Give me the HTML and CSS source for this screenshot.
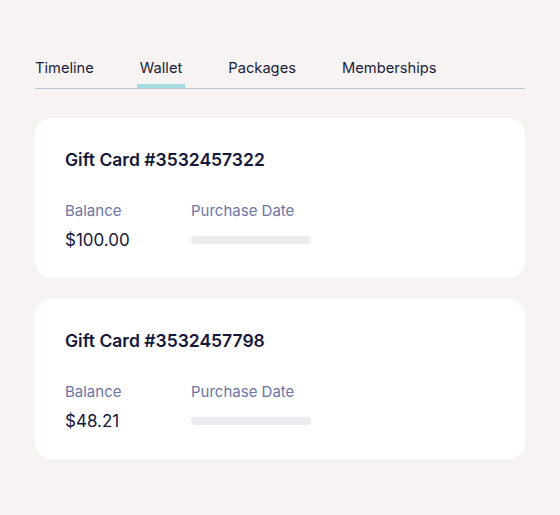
FILE: index.html
```html
<!DOCTYPE html>
<html lang="en">
<head>
    <meta charset="UTF-8">
    <meta name="viewport" content="width=device-width, initial-scale=1.0">
    <title>Wallet</title>
    <link rel="stylesheet" href="styles.css">
</head>
<body>
    <div class="page">
        <nav class="tabs">
            <a class="tab">Timeline</a>
            <a class="tab active">Wallet</a>
            <a class="tab">Packages</a>
            <a class="tab">Memberships</a>
        </nav>

        <div class="cards">
            <div class="card">
                <h2 class="card-title">Gift Card #3532457322</h2>
                <div class="card-fields">
                    <div class="field field-balance">
                        <span class="field-label">Balance</span>
                        <span class="field-value">$100.00</span>
                    </div>
                    <div class="field">
                        <span class="field-label">Purchase Date</span>
                        <span class="placeholder"></span>
                    </div>
                </div>
            </div>

            <div class="card">
                <h2 class="card-title">Gift Card #3532457798</h2>
                <div class="card-fields">
                    <div class="field field-balance">
                        <span class="field-label">Balance</span>
                        <span class="field-value">$48.21</span>
                    </div>
                    <div class="field">
                        <span class="field-label">Purchase Date</span>
                        <span class="placeholder"></span>
                    </div>
                </div>
            </div>
        </div>
    </div>
</body>
</html>
```

FILE: styles.css
```css
body {
    margin: 0;
    background: #f6f3f2;
    font-family: 'Inter', 'Noto Sans', sans-serif;
    color: #1b1c3d;
}

.page {
    padding: 58px 35px 40px;
}

.tabs {
    display: flex;
    gap: 46px;
    border-bottom: 1px solid #bcc0da;
}

.tab {
    position: relative;
    font-size: 14.7px;
    line-height: 20px;
    padding-bottom: 10px;
    color: #1b1c3d;
}

.tab.active::after {
    content: "";
    position: absolute;
    left: -3px;
    right: -3px;
    bottom: 0;
    height: 4px;
    background: #a3dbe0;
}

.cards {
    display: flex;
    flex-direction: column;
    gap: 21px;
    margin-top: 29px;
}

.card {
    background: #ffffff;
    border-radius: 16px;
    padding: 31px 30px 30px;
    height: 160px;
    box-sizing: border-box;
}

.card-title {
    margin: 0;
    font-size: 17.5px;
    line-height: 22px;
    font-weight: 600;
    color: #15183a;
}

.card-fields {
    display: flex;
    margin-top: 30px;
}

.field {
    display: flex;
    flex-direction: column;
    gap: 8px;
}

.field-balance {
    width: 126px;
}

.field-label {
    font-size: 15px;
    line-height: 20px;
    color: #6c76a6;
}

.field-value {
    font-size: 17px;
    line-height: 22px;
    color: #15183a;
}

.placeholder {
    display: block;
    width: 120px;
    height: 8px;
    margin-top: 7px;
    border-radius: 4px;
    background: #ebebf0;
}
```
